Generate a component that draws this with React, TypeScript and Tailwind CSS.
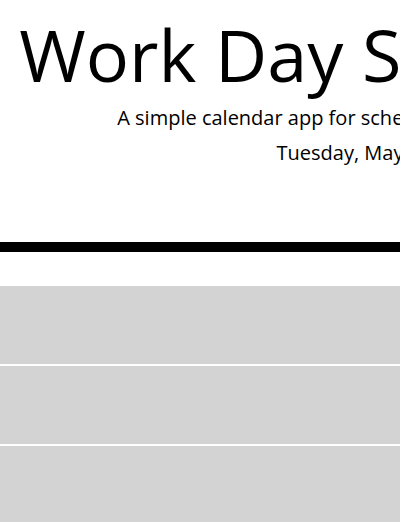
const hours = ['9AM', '10AM', '11AM', '12PM', '1PM']

export default function App() {
  return (
    <div className="min-w-[716px] bg-white font-['Open_Sans',sans-serif] text-black">
      <header className="border-b-[10px] border-black pt-[11px] pb-[74px] text-center">
        <h1 className="text-[72px] leading-[86px] font-normal">Work Day Scheduler</h1>
        <p className="mt-[6px] text-[20px] leading-[30px]">
          A simple calendar app for scheduling your work day
        </p>
        <p className="mt-[5px] text-[20px] leading-[30px]">Tuesday, May 4th</p>
      </header>
      <div className="mt-[32px] flex flex-col">
        {hours.map((h) => (
          <div key={h} className="h-[80px] border-t-2 border-white bg-[#d3d3d3]" />
        ))}
      </div>
    </div>
  )
}
